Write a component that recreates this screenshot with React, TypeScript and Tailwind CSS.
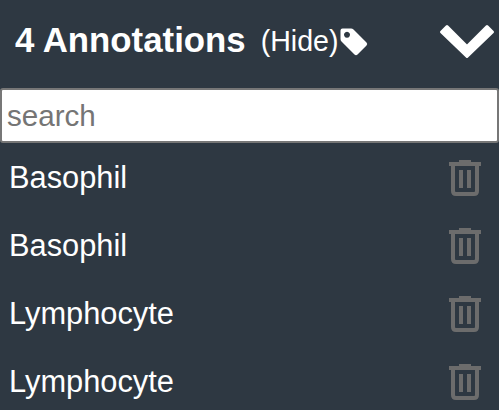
function Tag() {
  return (
    <svg width="28" height="28" viewBox="0 0 28 28" className="ml-[1px] mt-[-4px] shrink-0">
      <path
        d="M2.5 0.5 H11 Q12.5 0.5 13.5 1.5 L26.5 14.5 Q28 16 26.5 17.5 L17.5 26.5 Q16 28 14.5 26.5 L1.5 13.5 Q0.5 12.5 0.5 11 V2.5 Q0.5 0.5 2.5 0.5 Z M7 3.7 a3 3 0 1 0 0.01 0 Z"
        fill="#fff"
        fillRule="evenodd"
      />
    </svg>
  );
}

function Chevron() {
  return (
    <svg width="56" height="35" viewBox="0 0 56 35" className="ml-auto mt-[-5px] shrink-0">
      <path
        d="M8 2.5 L28 22.5 L48 2.5 L53.5 8 L28 32.5 L2.5 8 Z"
        fill="#fff"
        stroke="#fff"
        strokeWidth="3"
        strokeLinejoin="round"
      />
    </svg>
  );
}

function Trash() {
  return (
    <svg width="32" height="36" viewBox="0 0 32 36" fill="none" stroke="#6c6c6c" strokeWidth="4">
      <path d="M0 4 H32" />
      <path d="M10 1.5 H22" strokeWidth="3" />
      <path d="M4 4 V31 Q4 34 7 34 H25 Q28 34 28 31 V4" />
      <path d="M12 10 V28 M20 10 V28" />
    </svg>
  );
}

const items = ["Basophil", "Basophil", "Lymphocyte", "Lymphocyte"];

export default function App() {
  return (
    <div className="w-[499px] h-[410px] overflow-hidden bg-[#2e3842] text-white font-['Liberation_Sans',sans-serif]">
      <div className="h-[88px] flex items-center pl-[15px] pr-[4px]">
        <span className="text-[34.8px] font-bold leading-none mt-[-8px]">4 Annotations</span>
        <span className="ml-[15px] text-[28.6px] leading-none mt-[-6px]">(Hide)</span>
        <Tag />
        <Chevron />
      </div>
      <div>
        <input
          placeholder="search"
          className="w-full h-[55px] bg-white border-2 border-[#777] rounded-[3px] px-[5px] text-[29.6px] text-[#555] placeholder:text-[#757575] outline-none"
        />
      </div>
      <div className="pt-[1px]">
        {items.map((name, i) => (
          <div key={i} className="h-[68px] flex items-center justify-between pl-[9px] pr-[18px]">
            <span className="text-[30.8px]">{name}</span>
            <Trash />
          </div>
        ))}
      </div>
    </div>
  );
}
